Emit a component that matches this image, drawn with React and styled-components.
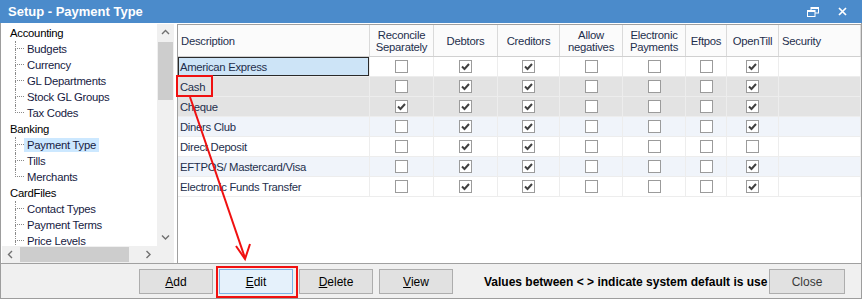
import React from 'react'
import styled, { createGlobalStyle } from 'styled-components'

const GlobalStyle = createGlobalStyle`
  html, body {
    margin: 0;
    padding: 0;
    background: #ffffff;
  }
  body {
    font-family: 'Liberation Sans', Arial, sans-serif;
  }
`

const columns = '192px 64px 64px 62px 63px 63px 41px 52px 1fr'

const Window = styled.div`
  position: relative;
  width: 862px;
  height: 299px;
  display: flex;
  flex-direction: column;
  overflow: hidden;
  background: #f0f0f0;
`

const TitleBar = styled.div`
  height: 23px;
  flex-shrink: 0;
  display: flex;
  align-items: center;
  justify-content: space-between;
  padding: 0 15px 0 8px;
  background: #4b8bcb;
  color: #ffffff;
  font-weight: bold;
  font-size: 13px;
`

const TitleButtons = styled.div`
  display: flex;
  align-items: center;
  gap: 19px;
`

const Frame = styled.div`
  flex: 1;
  display: flex;
  flex-direction: column;
  border: 1px solid #9d9d9d;
  border-top: none;
`

const Body = styled.div`
  height: 240px;
  display: flex;
  gap: 2px;
  padding: 1px 0 0 1px;
  box-sizing: border-box;
  background: #ffffff;
`

const TreePanel = styled.div`
  width: 172px;
  height: 239px;
  display: grid;
  grid-template-columns: 155px 17px;
  grid-template-rows: 222px 17px;
  background: #ffffff;
  margin-right: 1px;
`

const TreeList = styled.div`
  overflow: hidden;
  padding-top: 1px;
  font-size: 11.3px;
  letter-spacing: -0.25px;
`

const TreeRow = styled.div`
  height: 16px;
  display: flex;
  align-items: stretch;
  padding-left: ${p => (p.$child ? '13px' : '6px')};
  color: ${p => (p.$child ? '#161a3f' : '#000000')};
`

const Connector = styled.span`
  width: 9px;
  display: flex;
  flex-direction: column;
`

const ConnTop = styled.span`
  height: 7px;
  border-left: 1px dotted #8a8a8a;
  border-bottom: 1px dotted #8a8a8a;
`

const ConnBottom = styled.span`
  flex: 1;
  border-left: ${p => (p.$last ? 'none' : '1px dotted #8a8a8a')};
`

const TreeLabel = styled.span`
  display: flex;
  align-items: center;
  padding: 0 3px;
  margin: 1px 0;
  background: ${p => (p.$selected ? '#cce8ff' : 'transparent')};
  line-height: 14px;
`

const RootLabel = styled.span`
  display: flex;
  align-items: center;
  padding: 0 2px;
`

const VScroll = styled.div`
  background: #f0f0f0;
  display: flex;
  flex-direction: column;
`

const HScroll = styled.div`
  background: #f0f0f0;
  display: flex;
`

const Corner = styled.div`
  background: #f0f0f0;
`

const ArrowBox = styled.div`
  width: 17px;
  height: 17px;
  flex-shrink: 0;
  display: flex;
  align-items: center;
  justify-content: center;
`

const VThumb = styled.div`
  height: 58px;
  margin: 1px 1px 0;
  background: #cdcdcd;
`

const HThumb = styled.div`
  width: 109px;
  margin: 1px 0 1px 1px;
  background: #cdcdcd;
`

const Spacer = styled.div`
  flex: 1;
`

const GridPanel = styled.div`
  flex: 1;
  border: 1px solid #a0a0a0;
  border-right: none;
  border-bottom: none;
  background: #ffffff;
  font-size: 11.3px;
  color: #1e2f4d;
  overflow: hidden;
`

const HeaderRow = styled.div`
  display: grid;
  grid-template-columns: ${columns};
  height: 32px;
  background: #fbfbfb;
  border-bottom: 1px solid #d0d0d0;
  box-sizing: border-box;
`

const HeaderCell = styled.div`
  display: flex;
  align-items: center;
  justify-content: ${p => (p.$left ? 'flex-start' : 'center')};
  padding-left: ${p => (p.$left ? '3px' : '0')};
  text-align: center;
  line-height: 12px;
  border-right: 1px solid #dadada;
  letter-spacing: -0.25px;
`

const tones = {
  white: '#ffffff',
  grey: '#e3e3e3',
  alt: '#f0f4fa',
}

const GridRow = styled.div`
  display: grid;
  grid-template-columns: ${columns};
  height: 20px;
  background: ${p => tones[p.$tone]};
`

const Cell = styled.div`
  display: flex;
  align-items: center;
  justify-content: center;
  border-right: 1px solid #ededed;
  border-bottom: 1px solid #ededed;
`

const DescCell = styled(Cell)`
  justify-content: flex-start;
  padding-left: 2px;
  letter-spacing: -0.3px;
  background: ${p => (p.$focus ? '#cde4f7' : 'transparent')};
  box-shadow: ${p => (p.$focus ? 'inset 0 0 0 1px #2a2a2a' : 'none')};
`

const Box = styled.span`
  width: 13px;
  height: 13px;
  box-sizing: border-box;
  border: 1px solid #9b9b9b;
  background: #ffffff;
  display: flex;
`

const Footer = styled.div`
  flex: 1;
  display: flex;
  align-items: flex-start;
  padding: 5px 0 0 138px;
  border-top: 1px solid #a0a0a0;
  background: #f0f0f0;
`

const ButtonGroup = styled.div`
  display: flex;
  gap: 6px;
`

const Button = styled.button`
  width: ${p => p.$width || 74}px;
  height: 25px;
  padding: 0;
  font-family: 'Liberation Sans', Arial, sans-serif;
  font-size: 12px;
  color: ${p => (p.$muted ? '#3a3a3a' : '#000000')};
  background: ${p => (p.$active ? '#e5f1fb' : '#e1e1e1')};
  border: 1px solid ${p => (p.$active ? '#7ab3e6' : '#adadad')};
  u {
    text-decoration: underline;
  }
`

const Note = styled.div`
  width: 285px;
  height: 25px;
  margin-left: 31px;
  display: flex;
  align-items: center;
  white-space: nowrap;
  font-size: 12px;
  font-weight: bold;
  color: #000000;
`

const Overlay = styled.svg`
  position: absolute;
  left: 0;
  top: 0;
  pointer-events: none;
`

const Chevron = ({ dir }) => {
  const pts = {
    up: '1,5 4.5,1.5 8,5',
    down: '1,1.5 4.5,5 8,1.5',
    left: '5,1 1.5,4.5 5,8',
    right: '1.5,1 5,4.5 1.5,8',
  }[dir]
  const vertical = dir === 'up' || dir === 'down'
  return (
    <svg width={vertical ? 9 : 7} height={vertical ? 7 : 9}>
      <polyline points={pts} fill="none" stroke="#707070" strokeWidth="1.4" />
    </svg>
  )
}

const Check = ({ on }) => (
  <Box>
    {on ? (
      <svg width="11" height="11">
        <polyline points="2,5.5 4.5,8 9,3" fill="none" stroke="#404040" strokeWidth="2" />
      </svg>
    ) : null}
  </Box>
)

const tree = [
  { label: 'Accounting' },
  { label: 'Budgets', child: true },
  { label: 'Currency', child: true },
  { label: 'GL Departments', child: true },
  { label: 'Stock GL Groups', child: true },
  { label: 'Tax Codes', child: true, last: true },
  { label: 'Banking' },
  { label: 'Payment Type', child: true, selected: true },
  { label: 'Tills', child: true },
  { label: 'Merchants', child: true, last: true },
  { label: 'CardFiles' },
  { label: 'Contact Types', child: true },
  { label: 'Payment Terms', child: true },
  { label: 'Price Levels', child: true },
]

const headers = [
  'Reconcile\nSeparately',
  'Debtors',
  'Creditors',
  'Allow\nnegatives',
  'Electronic\nPayments',
  'Eftpos',
  'OpenTill',
]

const rows = [
  { name: 'American Express', flags: [0, 1, 1, 0, 0, 0, 1], tone: 'white', focus: true },
  { name: 'Cash', flags: [0, 1, 1, 0, 0, 0, 1], tone: 'grey' },
  { name: 'Cheque', flags: [1, 1, 1, 0, 0, 0, 1], tone: 'grey' },
  { name: 'Diners Club', flags: [0, 1, 1, 0, 0, 0, 1], tone: 'alt' },
  { name: 'Direct Deposit', flags: [0, 1, 1, 0, 0, 0, 0], tone: 'white' },
  { name: 'EFTPOS/ Mastercard/Visa', flags: [0, 1, 1, 0, 0, 0, 1], tone: 'alt' },
  { name: 'Electronic Funds Transfer', flags: [0, 1, 1, 0, 0, 0, 1], tone: 'white' },
]

const App = () => (
  <>
    <GlobalStyle />
    <Window>
      <TitleBar>
        <span>Setup - Payment Type</span>
        <TitleButtons>
          <svg width="12" height="10">
            <rect x="4" y="0.5" width="7.5" height="5.5" fill="none" stroke="#fff" strokeWidth="1" />
            <line x1="4" y1="1" x2="11.5" y2="1" stroke="#fff" strokeWidth="2" />
            <rect x="0.5" y="3.5" width="7.5" height="6" fill="#4b8bcb" stroke="#fff" strokeWidth="1" />
            <line x1="0.5" y1="4" x2="8" y2="4" stroke="#fff" strokeWidth="2" />
          </svg>
          <svg width="9" height="9">
            <path d="M1 1 L8 8 M8 1 L1 8" stroke="#fff" strokeWidth="1.7" />
          </svg>
        </TitleButtons>
      </TitleBar>
      <Frame>
        <Body>
          <TreePanel>
            <TreeList>
              {tree.map(item =>
                item.child ? (
                  <TreeRow key={item.label} $child>
                    <Connector>
                      <ConnTop />
                      <ConnBottom $last={item.last} />
                    </Connector>
                    <TreeLabel $selected={item.selected}>{item.label}</TreeLabel>
                  </TreeRow>
                ) : (
                  <TreeRow key={item.label}>
                    <RootLabel>{item.label}</RootLabel>
                  </TreeRow>
                )
              )}
            </TreeList>
            <VScroll>
              <ArrowBox><Chevron dir="up" /></ArrowBox>
              <VThumb />
              <Spacer />
              <ArrowBox><Chevron dir="down" /></ArrowBox>
            </VScroll>
            <HScroll>
              <ArrowBox><Chevron dir="left" /></ArrowBox>
              <HThumb />
              <Spacer />
              <ArrowBox><Chevron dir="right" /></ArrowBox>
            </HScroll>
            <Corner />
          </TreePanel>
          <GridPanel>
            <HeaderRow>
              <HeaderCell $left>Description</HeaderCell>
              {headers.map(h => (
                <HeaderCell key={h}>
                  <span>
                    {h.split('\n').map((line, i) => (
                      <React.Fragment key={line}>
                        {i > 0 && <br />}
                        {line}
                      </React.Fragment>
                    ))}
                  </span>
                </HeaderCell>
              ))}
              <HeaderCell $left>Security</HeaderCell>
            </HeaderRow>
            {rows.map(row => (
              <GridRow key={row.name} $tone={row.tone}>
                <DescCell $focus={row.focus}>{row.name}</DescCell>
                {row.flags.map((f, i) => (
                  <Cell key={i}>
                    <Check on={!!f} />
                  </Cell>
                ))}
                <Cell />
              </GridRow>
            ))}
          </GridPanel>
        </Body>
        <Footer>
          <ButtonGroup>
            <Button><u>A</u>dd</Button>
            <Button $active><u>E</u>dit</Button>
            <Button><u>D</u>elete</Button>
            <Button><u>V</u>iew</Button>
          </ButtonGroup>
          <Note>Values between &lt; &gt; indicate system default is use</Note>
          <Button $width={76} $muted>Close</Button>
        </Footer>
      </Frame>
      <Overlay width="862" height="299">
        <rect x="177" y="76" width="35" height="20" fill="none" stroke="#f01010" strokeWidth="2" />
        <rect x="217" y="267" width="80" height="30" fill="none" stroke="#f01010" strokeWidth="2" />
        <line x1="190" y1="97" x2="245" y2="258" stroke="#f01010" strokeWidth="2" />
        <polyline points="236,246 245,259 250,244" fill="none" stroke="#f01010" strokeWidth="2" />
      </Overlay>
    </Window>
  </>
)

export default App
